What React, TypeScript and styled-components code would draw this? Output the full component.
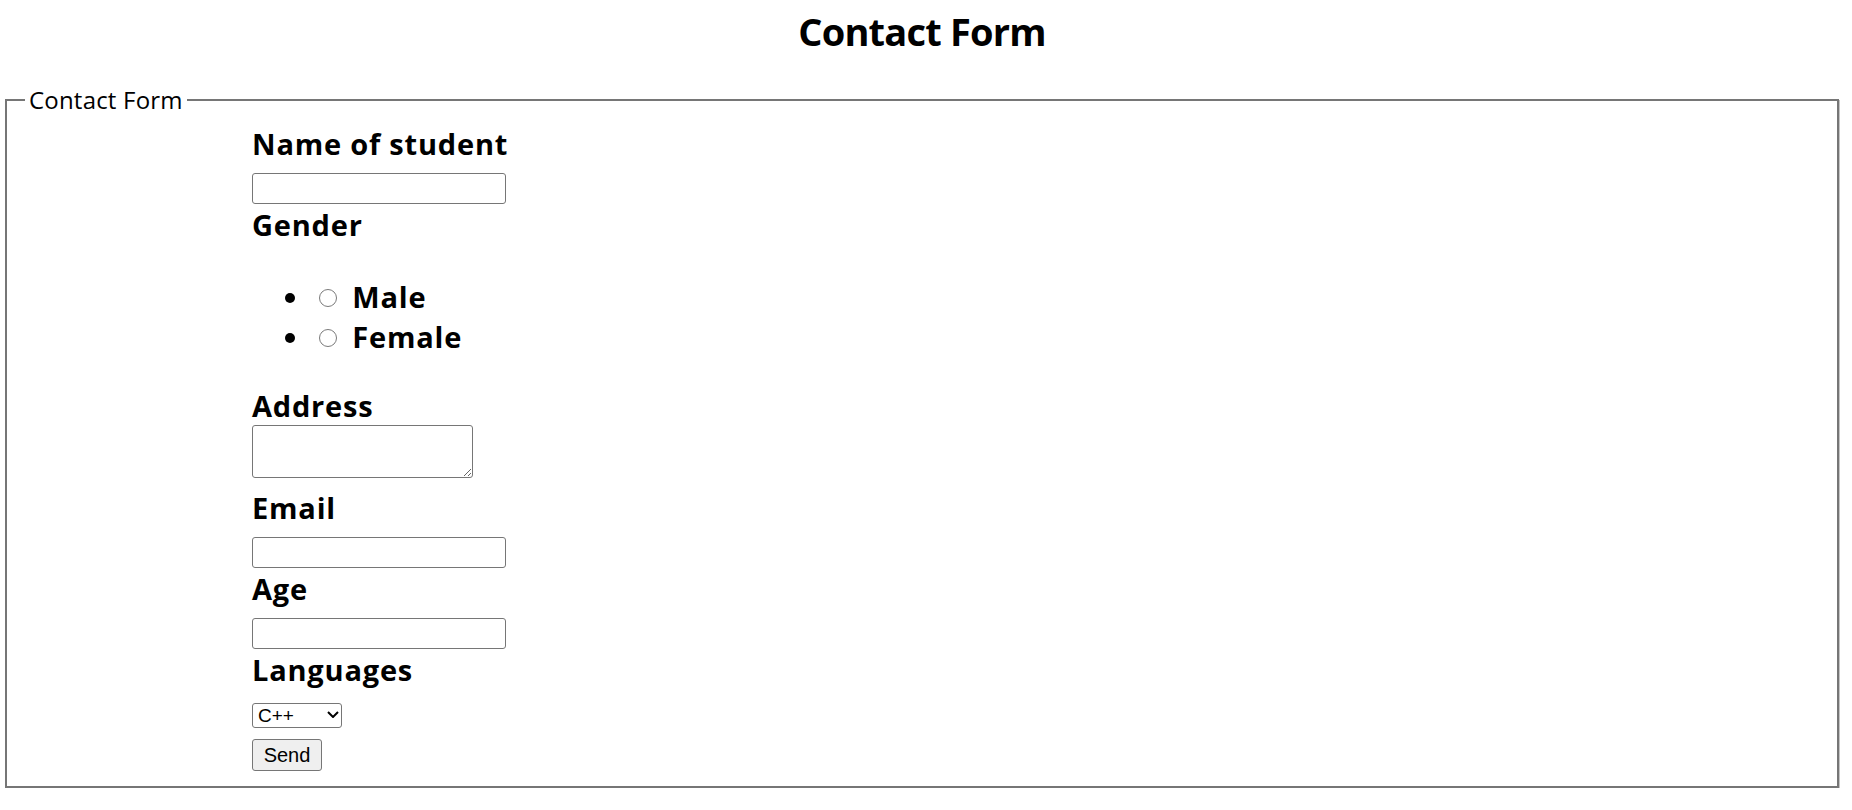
import React from 'react';
import styled, { createGlobalStyle } from 'styled-components';

const GlobalStyle = createGlobalStyle`
  html, body { margin: 0; padding: 0; background: #ffffff; }
  body { font-family: "Open Sans", Lato, sans-serif; color: #000000; }
`;

const Page = styled.main`
  margin: 0 13px 0 5px;
`;

const Title = styled.h1`
  margin: 7px 0 0;
  text-align: center;
  font: 700 38px/48px "Open Sans", sans-serif;
  letter-spacing: -0.8px;
`;

const Fieldset = styled.fieldset`
  margin: 30px 0 0;
  min-width: 0;
  padding: 13px 0 15px 18px;
  border: 2px solid #767676;
  box-shadow: 1px 1px 0 #c4c4c4;
`;

const Legend = styled.legend`
  padding: 0 4px;
  font: 400 24px/29px "Open Sans", sans-serif;
  letter-spacing: 0.2px;
`;

const Form = styled.form`
  display: flex;
  flex-direction: column;
  align-items: flex-start;
  margin-left: 227px;
`;

const FieldLabel = styled.label`
  display: block;
  font: 700 29px/34px "Open Sans", sans-serif;
  letter-spacing: 0.8px;
`;

const TextInput = styled.input`
  box-sizing: border-box;
  width: 254px;
  height: 31px;
  margin: 12px 0 4px;
  padding: 1px 3px;
  border: 1px solid #767676;
  border-radius: 3px;
  background: #ffffff;
  font: 400 20px "Liberation Sans", Arial, sans-serif;
`;

const GenderList = styled.ul`
  margin: 35px 0 32px;
  padding: 0 0 0 60px;
  list-style: disc;
  font: 700 29px/40px "Open Sans", sans-serif;
  letter-spacing: 0.8px;
`;

const GenderItem = styled.li`
  margin: 0;
`;

const Radio = styled.input`
  appearance: none;
  box-sizing: border-box;
  width: 18px;
  height: 18px;
  margin: 0 7px 0 7px;
  border: 1.5px solid #7a7a7a;
  border-radius: 50%;
  background: #ffffff;
  vertical-align: 1px;
`;

const AddressArea = styled.textarea`
  box-sizing: border-box;
  width: 221px;
  height: 53px;
  margin: 2px 0 13px;
  padding: 2px;
  border: 1px solid #767676;
  border-radius: 3px;
  font: 400 20px "Liberation Mono", monospace;
`;

const SelectWrap = styled.div`
  position: relative;
  margin-top: 16px;
  width: 90px;
  height: 25px;
`;

const LanguageSelect = styled.select`
  appearance: none;
  box-sizing: border-box;
  width: 90px;
  height: 25px;
  margin: 0;
  padding: 0 0 0 5px;
  border: 1px solid #767676;
  border-radius: 3px;
  background: #ffffff;
  color: #000000;
  font: 400 19px/23px "Liberation Sans", Arial, sans-serif;
`;

const Chevron = styled.svg`
  position: absolute;
  right: 3px;
  top: 8px;
  pointer-events: none;
`;

const SendButton = styled.button`
  box-sizing: border-box;
  width: 70px;
  height: 32px;
  margin-top: 11px;
  padding: 0;
  border: 1px solid #767676;
  border-radius: 3px;
  background: #efefef;
  color: #000000;
  font: 400 20px "Liberation Sans", Arial, sans-serif;
`;

export default function App() {
  return (
    <>
      <GlobalStyle />
      <Page>
        <Title>Contact Form</Title>
        <Fieldset>
          <Legend>Contact Form</Legend>
          <Form onSubmit={(e) => e.preventDefault()}>
            <FieldLabel htmlFor="name">Name of student</FieldLabel>
            <TextInput id="name" type="text" />
            <FieldLabel>Gender</FieldLabel>
            <GenderList>
              <GenderItem>
                <label>
                  <Radio type="radio" name="gender" value="male" /> Male
                </label>
              </GenderItem>
              <GenderItem>
                <label>
                  <Radio type="radio" name="gender" value="female" /> Female
                </label>
              </GenderItem>
            </GenderList>
            <FieldLabel htmlFor="address">Address</FieldLabel>
            <AddressArea id="address" />
            <FieldLabel htmlFor="email">Email</FieldLabel>
            <TextInput id="email" type="email" />
            <FieldLabel htmlFor="age">Age</FieldLabel>
            <TextInput id="age" type="text" />
            <FieldLabel htmlFor="lang">Languages</FieldLabel>
            <SelectWrap>
              <LanguageSelect id="lang" defaultValue="cpp">
                <option value="cpp">C++</option>
                <option value="java">Java</option>
                <option value="python">Python</option>
              </LanguageSelect>
              <Chevron width="12" height="7" viewBox="0 0 12 7">
                <path d="M1 1 L6 6 L11 1" fill="none" stroke="#000" strokeWidth="2" />
              </Chevron>
            </SelectWrap>
            <SendButton type="submit">Send</SendButton>
          </Form>
        </Fieldset>
      </Page>
    </>
  );
}
